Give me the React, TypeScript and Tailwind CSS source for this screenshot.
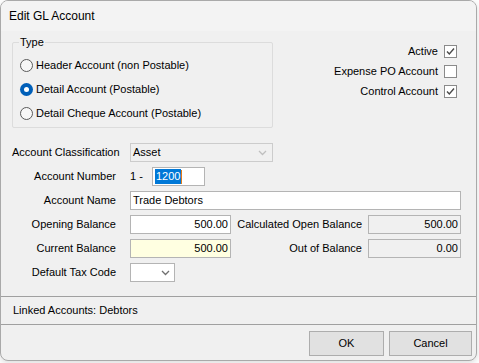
import type { ReactNode } from "react";

const FONT = "font-['Liberation_Sans',Arial,sans-serif]";

function Radio({ checked, label }: { checked?: boolean; label: string }) {
  return (
    <div className="flex items-center h-[24px] gap-[3px]">
      {checked ? (
        <span className="w-[13px] h-[13px] rounded-full bg-[#005fb8] flex items-center justify-center">
          <span className="w-[5px] h-[5px] rounded-full bg-white" />
        </span>
      ) : (
        <span className="w-[13px] h-[13px] rounded-full border border-[#5a5a5a] bg-[#f7f7f7]" />
      )}
      <span>{label}</span>
    </div>
  );
}

function Check({ checked, label }: { checked?: boolean; label: string }) {
  return (
    <div className="flex items-center justify-end h-[20px] gap-[6px]">
      <span>{label}</span>
      <span className="w-[13px] h-[13px] border border-[#8a8a8a] bg-white flex items-center justify-center">
        {checked && (
          <svg width="11" height="11" viewBox="0 0 11 11">
            <path d="M2 5.5 L4.3 8 L9 2.5" fill="none" stroke="#4a4a4a" strokeWidth="1.4" />
          </svg>
        )}
      </span>
    </div>
  );
}

function Row({ label, children }: { label: string; children: ReactNode }) {
  return (
    <div className="flex items-center h-[19px]">
      <div className="w-[104px] text-right shrink-0">{label}</div>
      <div className="ml-[14px] flex items-center flex-1">{children}</div>
    </div>
  );
}

function Chevron({ color }: { color: string }) {
  return (
    <svg width="9" height="6" viewBox="0 0 9 6" className="shrink-0">
      <path d="M1 1 L4.5 4.5 L8 1" fill="none" stroke={color} strokeWidth="1.3" />
    </svg>
  );
}

export default function App() {
  return (
    <div className={`w-[479px] h-[363px] bg-white overflow-hidden ${FONT} text-[11px] text-black leading-none whitespace-nowrap`}>
      <div className="w-[477px] h-[361px] rounded-[8px] border border-[#a9a9a9] bg-[#f0f0f0] overflow-hidden flex flex-col shadow-[0_2px_6px_rgba(0,0,0,0.15)]">
        {/* title */}
        <div className="h-[30px] shrink-0 bg-[#f3f3f3] flex items-center pl-[8px] pb-[1px] text-[12px]">
          Edit GL Account
        </div>

        {/* body */}
        <div className="flex-1 flex flex-col pl-[11px] pr-[15px] pt-[11px]">
          <div className="flex">
            <div className="relative w-[261px] h-[86px] border border-[#dcdcdc] rounded-[2px] pl-[7px] pt-[10px]">
              <span className="absolute -top-[6px] left-[6px] bg-[#f0f0f0] px-[1px]">Type</span>
              <Radio label="Header Account (non Postable)" />
              <Radio checked label="Detail Account (Postable)" />
              <Radio label="Detail Cheque Account (Postable)" />
            </div>
            <div className="flex-1 flex flex-col items-end pr-[4px] -mt-[1px]">
              <Check checked label="Active" />
              <Check label="Expense PO Account" />
              <Check checked label="Control Account" />
            </div>
          </div>

          <div className="flex flex-col gap-[5px] mt-[15px]">
            <Row label="Account Classification">
              <div className="w-[143px] h-[19px] border border-[#cccccc] bg-[#f0f0f0] flex items-center justify-between pl-[2px] pr-[5px]">
                <span>Asset</span>
                <Chevron color="#bfbfbf" />
              </div>
            </Row>
            <Row label="Account Number">
              <span className="w-[22px]">1 -</span>
              <div className="w-[53px] h-[19px] border border-[#b4b4b4] bg-white flex items-center pl-[2px]">
                <span className="bg-[#0078d7] text-white h-[15px] flex items-center px-[1px]">1200</span>
                <span className="w-[1px] h-[14px] bg-[#e07b1a]" />
              </div>
            </Row>
            <Row label="Account Name">
              <div className="w-[331px] h-[19px] border border-[#b4b4b4] bg-white flex items-center pl-[2px]">
                Trade Debtors
              </div>
            </Row>
            <Row label="Opening Balance">
              <div className="w-[101px] h-[19px] border border-[#b4b4b4] bg-white flex items-center justify-end pr-[2px]">
                500.00
              </div>
              <div className="flex-1 text-right pr-[6px]">Calculated Open Balance</div>
              <div className="w-[93px] h-[19px] border border-[#b4b4b4] bg-[#f0f0f0] flex items-center justify-end pr-[2px]">
                500.00
              </div>
            </Row>
            <Row label="Current Balance">
              <div className="w-[101px] h-[19px] border border-[#b4b4b4] bg-[#ffffe1] flex items-center justify-end pr-[2px]">
                500.00
              </div>
              <div className="flex-1 text-right pr-[6px]">Out of Balance</div>
              <div className="w-[93px] h-[19px] border border-[#b4b4b4] bg-[#f0f0f0] flex items-center justify-end pr-[2px]">
                0.00
              </div>
            </Row>
            <Row label="Default Tax Code">
              <div className="w-[45px] h-[19px] border border-[#b4b4b4] bg-white flex items-center justify-end pr-[4px]">
                <Chevron color="#707070" />
              </div>
            </Row>
          </div>
        </div>

        {/* linked accounts */}
        <div className="h-[29px] shrink-0 border-t border-b border-[#a0a0a0] flex items-center pl-[12px]">
          Linked Accounts: Debtors
        </div>

        {/* buttons */}
        <div className="h-[35px] shrink-0 flex items-start justify-end gap-[5px] pt-[6px] pr-[4px]">
          <button className="w-[75px] h-[25px] bg-[#e1e1e1] border border-[#adadad] flex items-center justify-center">
            OK
          </button>
          <button className="w-[83px] h-[25px] bg-[#e1e1e1] border border-[#adadad] flex items-center justify-center">
            Cancel
          </button>
        </div>
      </div>
    </div>
  );
}
